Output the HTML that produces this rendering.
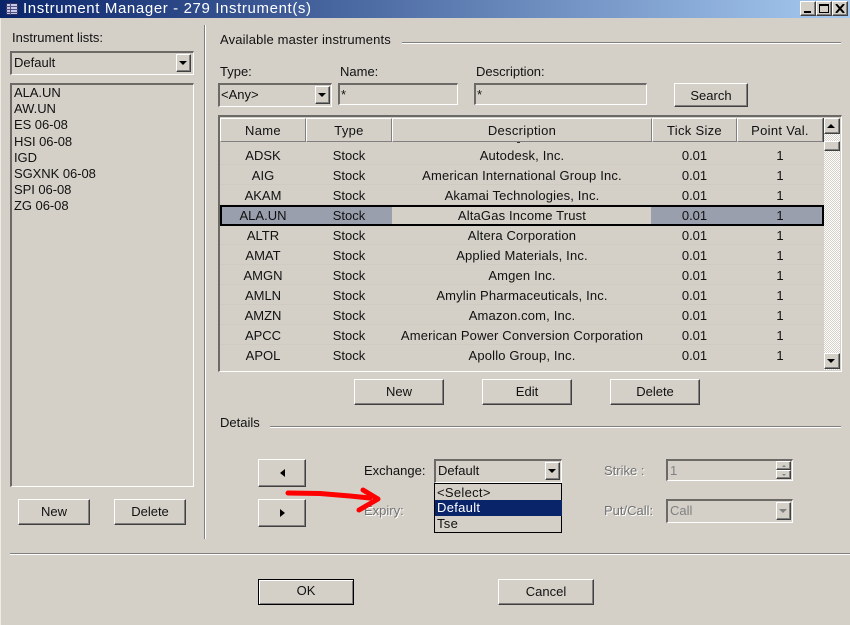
<!DOCTYPE html>
<html><head><meta charset="utf-8"><style>
html,body{margin:0;padding:0}
body{width:850px;height:625px;position:relative;overflow:hidden;background:#d4d0c8;font:13px/16px "Liberation Sans",sans-serif;color:#111}
div,span{position:absolute;box-sizing:border-box;white-space:nowrap}
.sunk{background:#d4d0c8;border-style:solid;border-width:2px 1px 1px 2px;border-color:#6c6a66 #fff #fff #6c6a66}
.btn{background:#d4d0c8;border:1px solid;border-color:#fff #404040 #404040 #fff;box-shadow:inset -1px -1px 0 #808080;text-align:center}
.dd{background:#d4d0c8;border:1px solid;border-color:#fff #404040 #404040 #fff;box-shadow:inset -1px -1px 0 #808080}
.dd i{position:absolute;left:50%;top:50%;margin:-2px 0 0 -5px;width:0;height:0;border:4px solid transparent;border-top:4px solid #000;border-bottom:0}
.l{line-height:16px}
.g{color:#727272;text-shadow:1px 1px 0 #fff}
.hl{height:2px;background:linear-gradient(#808080 50%,#fff 50%)}
.vl{width:2px;background:linear-gradient(90deg,#808080 50%,#fff 50%)}
.h{top:118px;height:24px;line-height:24px;text-align:center;background:#d4d0c8;border:1px solid;border-color:#fff #808080 #808080 #fff;box-shadow:1px 0 0 #404040;letter-spacing:.3px}
.r{height:20px;left:220px;width:603px;line-height:20px;border-bottom:1px solid #cfcbc3}
.r span{top:1px;text-align:center;height:18px}
.a{left:0;width:86px}.b{left:86px;width:86px}.c{left:172px;width:260px;letter-spacing:.16px}.d{left:432px;width:85px}.e{left:517px;width:86px}
</style></head><body>
<div style="left:0;top:0;width:850px;height:18px;background:linear-gradient(90deg,#0a246a,#a6caf0)"></div>
<svg style="position:absolute;left:5px;top:2px" width="14" height="14" viewBox="0 0 14 14"><rect x="1.500" y="1.500" width="11" height="11" fill="#c8c8e8" stroke="#303060"/><path d="M1 4.500h12M1 7.500h12M1 10.500h12M5.500 1v12" stroke="#505080"/></svg>
<div style="left:23px;top:0;height:18px;line-height:18px;font-size:15px;color:#fff;letter-spacing:.62px">Instrument Manager - 279 Instrument(s)</div>
<div class="btn" style="left:800px;top:1px;width:16px;height:15px"><div style="left:3px;top:9px;width:7px;height:2px;background:#000"></div></div>
<div class="btn" style="left:816px;top:1px;width:16px;height:15px"><div style="left:2px;top:2px;width:10px;height:9px;border:1px solid #000;border-top-width:2px"></div></div>
<div class="btn" style="left:832px;top:1px;width:16px;height:15px"><svg style="position:absolute;left:2px;top:2px" width="10" height="9"><path d="M1 0L9 9M9 0L1 9" stroke="#000" stroke-width="2"/></svg></div>
<div style="left:0;top:18px;width:1px;height:607px;background:#ecebe6"></div>

<div class="l" style="left:12px;top:30px">Instrument lists:</div>
<div class="sunk" style="left:10px;top:51px;width:184px;height:24px"></div>
<div class="l" style="left:14px;top:55px">Default</div>
<div class="dd" style="left:176px;top:54px;width:15px;height:18px"><i></i></div>
<div class="sunk" style="left:10px;top:83px;width:184px;height:404px"></div>
<div style="left:14px;top:85px;line-height:16.2px;position:absolute;white-space:pre;letter-spacing:-.05px">ALA.UN
AW.UN
ES 06-08
HSI 06-08
IGD
SGXNK 06-08
SPI 06-08
ZG 06-08</div>
<div class="btn" style="left:18px;top:499px;width:72px;height:26px;line-height:23px">New</div>
<div class="btn" style="left:114px;top:499px;width:72px;height:26px;line-height:23px">Delete</div>
<div class="vl" style="left:204px;top:25px;height:514px"></div>

<div class="l" style="left:220px;top:32px;letter-spacing:.15px">Available master instruments</div>
<div class="hl" style="left:402px;top:42px;width:439px"></div>
<div class="l" style="left:220px;top:64px">Type:</div>
<div class="l" style="left:340px;top:64px">Name:</div>
<div class="l" style="left:476px;top:64px">Description:</div>
<div class="sunk" style="left:218px;top:83px;width:114px;height:24px"></div>
<div class="l" style="left:221px;top:87px">&lt;Any&gt;</div>
<div class="dd" style="left:315px;top:86px;width:15px;height:18px"><i></i></div>
<div class="sunk" style="left:338px;top:83px;width:120px;height:22px"></div>
<div class="l" style="left:341px;top:87px">*</div>
<div class="sunk" style="left:474px;top:83px;width:173px;height:22px"></div>
<div class="l" style="left:477px;top:87px">*</div>
<div class="btn" style="left:674px;top:83px;width:74px;height:24px;line-height:23px">Search</div>

<div class="sunk" style="left:218px;top:115px;width:624px;height:257px"></div>
<div class="h" style="left:220px;width:86px">Name</div>
<div class="h" style="left:306px;width:86px">Type</div>
<div class="h" style="left:392px;width:260px">Description</div>
<div class="h" style="left:652px;width:85px">Tick Size</div>
<div class="h" style="left:737px;width:86px">Point Val.</div>
<div style="left:517px;top:142px;width:3px;height:1px;background:#333"></div>
<div class="r" style="top:145px"><span class="a">ADSK</span><span class="b">Stock</span><span class="c">Autodesk, Inc.</span><span class="d">0.01</span><span class="e">1</span></div>
<div class="r" style="top:165px"><span class="a">AIG</span><span class="b">Stock</span><span class="c">American International Group Inc.</span><span class="d">0.01</span><span class="e">1</span></div>
<div class="r" style="top:185px"><span class="a">AKAM</span><span class="b">Stock</span><span class="c">Akamai Technologies, Inc.</span><span class="d">0.01</span><span class="e">1</span></div>
<div style="left:220px;top:207px;width:172px;height:18px;background:#9a9fae"></div>
<div style="left:651px;top:207px;width:172px;height:18px;background:#9a9fae"></div>
<div style="left:220px;top:205px;width:604px;height:21px;border:2px solid #000"></div>
<div class="r" style="top:205px;border:0"><span class="a">ALA.UN</span><span class="b">Stock</span><span class="c">AltaGas Income Trust</span><span class="d">0.01</span><span class="e">1</span></div>
<div class="r" style="top:225px"><span class="a">ALTR</span><span class="b">Stock</span><span class="c">Altera Corporation</span><span class="d">0.01</span><span class="e">1</span></div>
<div class="r" style="top:245px"><span class="a">AMAT</span><span class="b">Stock</span><span class="c">Applied Materials, Inc.</span><span class="d">0.01</span><span class="e">1</span></div>
<div class="r" style="top:265px"><span class="a">AMGN</span><span class="b">Stock</span><span class="c">Amgen Inc.</span><span class="d">0.01</span><span class="e">1</span></div>
<div class="r" style="top:285px"><span class="a">AMLN</span><span class="b">Stock</span><span class="c">Amylin Pharmaceuticals, Inc.</span><span class="d">0.01</span><span class="e">1</span></div>
<div class="r" style="top:305px"><span class="a">AMZN</span><span class="b">Stock</span><span class="c">Amazon.com, Inc.</span><span class="d">0.01</span><span class="e">1</span></div>
<div class="r" style="top:325px"><span class="a">APCC</span><span class="b">Stock</span><span class="c">American Power Conversion Corporation</span><span class="d">0.01</span><span class="e">1</span></div>
<div class="r" style="top:345px;border:0"><span class="a">APOL</span><span class="b">Stock</span><span class="c">Apollo Group, Inc.</span><span class="d">0.01</span><span class="e">1</span></div>
<div style="left:824px;top:118px;width:16px;height:252px;background:repeating-conic-gradient(#fff 0 25%,#d4d0c8 0 50%) 0 0/2px 2px"></div>
<div class="dd" style="left:824px;top:118px;width:16px;height:16px"><i style="border-top:0;border-bottom:4px solid #000"></i></div>
<div class="dd" style="left:824px;top:141px;width:16px;height:10px"></div>
<div class="dd" style="left:824px;top:353px;width:16px;height:16px"><i></i></div>

<div class="btn" style="left:354px;top:379px;width:90px;height:26px;line-height:23px">New</div>
<div class="btn" style="left:482px;top:379px;width:90px;height:26px;line-height:23px">Edit</div>
<div class="btn" style="left:610px;top:379px;width:90px;height:26px;line-height:23px">Delete</div>
<div class="l" style="left:220px;top:415px">Details</div>
<div class="hl" style="left:270px;top:426px;width:571px"></div>
<div class="btn" style="left:258px;top:459px;width:48px;height:28px"><div style="left:21px;top:9px;width:0;height:0;border:4px solid transparent;border-right:5px solid #000;border-left:0"></div></div>
<div class="btn" style="left:258px;top:499px;width:48px;height:28px"><div style="left:21px;top:9px;width:0;height:0;border:4px solid transparent;border-left:5px solid #000;border-right:0"></div></div>
<div class="l" style="left:364px;top:463px">Exchange:</div>
<div class="sunk" style="left:434px;top:459px;width:128px;height:24px"></div>
<div class="l" style="left:438px;top:463px">Default</div>
<div class="dd" style="left:545px;top:462px;width:15px;height:18px"><i></i></div>
<div class="l g" style="left:364px;top:503px">Expiry:</div>
<div style="left:434px;top:483px;width:128px;height:50px;background:#d4d0c8;border:1px solid #000"></div>
<div style="left:435px;top:500px;width:127px;height:16px;background:#0a246a"></div>
<div class="l" style="left:437px;top:485px;letter-spacing:.3px">&lt;Select&gt;</div>
<div class="l" style="left:437px;top:500px;color:#fff;letter-spacing:.3px">Default</div>
<div class="l" style="left:437px;top:516px;letter-spacing:.3px">Tse</div>
<svg style="position:absolute;left:280px;top:484px" width="110" height="32"><path d="M8 9L40 9.500L70 12L90 14" fill="none" stroke="#f00" stroke-width="5" stroke-linecap="round"/><path d="M83 6L98 15L79 26" fill="none" stroke="#f00" stroke-width="5" stroke-linecap="round" stroke-linejoin="round"/></svg>

<div class="l g" style="left:604px;top:463px">Strike :</div>
<div class="sunk" style="left:666px;top:459px;width:127px;height:22px"></div>
<div class="l" style="left:670px;top:463px;color:#808080">1</div>
<div class="dd" style="left:776px;top:461px;width:15px;height:9px"><div style="left:5px;top:3px;width:0;height:0;border:2px solid transparent;border-bottom:2px solid #808080;border-top:0"></div></div>
<div class="dd" style="left:776px;top:470px;width:15px;height:9px"><div style="left:5px;top:3px;width:0;height:0;border:2px solid transparent;border-top:2px solid #808080;border-bottom:0"></div></div>
<div class="l g" style="left:604px;top:503px">Put/Call:</div>
<div class="sunk" style="left:666px;top:499px;width:127px;height:24px"></div>
<div class="l" style="left:670px;top:503px;color:#808080">Call</div>
<div class="dd" style="left:776px;top:502px;width:15px;height:18px"><i style="border-top-color:#808080"></i></div>

<div class="hl" style="left:10px;top:553px;width:840px"></div>
<div class="btn" style="left:258px;top:579px;width:96px;height:26px;line-height:22px;border:1px solid #000;box-shadow:inset 1px 1px 0 #fff,inset -1px -1px 0 #808080">OK</div>
<div class="btn" style="left:498px;top:579px;width:96px;height:26px;line-height:23px">Cancel</div>
</body></html>
